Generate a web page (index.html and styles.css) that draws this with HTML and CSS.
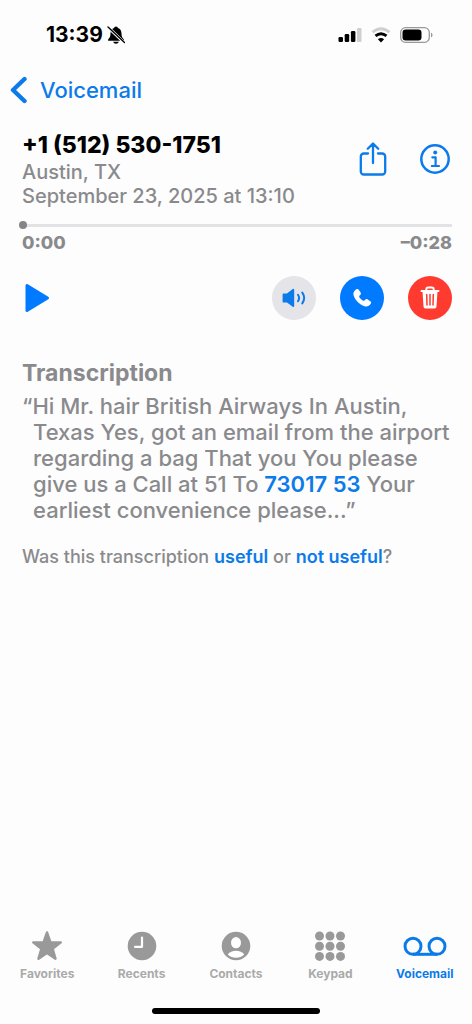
FILE: index.html
```html
<!DOCTYPE html>
<html lang="en">
<head>
<meta charset="utf-8">
<meta name="viewport" content="width=device-width, initial-scale=1">
<title>Voicemail</title>
<link rel="stylesheet" href="styles.css">
</head>
<body>
<div class="screen">
  <header class="status">
    <div class="status-left">
      <span class="clock">13:39</span>
      <svg class="bell" width="18" height="20" viewBox="0 0 18 20" aria-label="Silent">
        <path d="M9 1.500c-1.200 0-1.800.8-1.900 1.500C4.600 3.800 3.500 6 3.500 8.500c0 3.500-1.200 4.500-2.200 5.700-.6.800-.3 1.600.7 1.600h14c1 0 1.300-.8.7-1.600-1-1.200-2.200-2.200-2.200-5.700 0-2.500-1.100-4.700-3.600-5.500C10.800 2.300 10.200 1.500 9 1.500zM6.200 16.800h5.600c-.3 1.300-1.400 2-2.800 2s-2.500-.7-2.800-2z"/>
        <path d="M1 2.200 17 17.500" stroke="#fff" stroke-width="3"/>
        <path d="M1 2 17.500 17.500" stroke="#000" stroke-width="1.400" stroke-linecap="round"/>
      </svg>
    </div>
    <div class="status-right">
      <svg width="24" height="16" viewBox="0 0 24 16" aria-label="Signal">
        <rect x="0.500" y="10" width="4.500" height="5" rx="1.300"/>
        <rect x="6.700" y="7" width="4.500" height="8" rx="1.300"/>
        <rect x="12.900" y="4" width="4.500" height="11" rx="1.300"/>
        <rect x="19" y="1" width="4.500" height="14" rx="1.300" fill="#cfcfcf"/>
      </svg>
      <svg width="20" height="16" viewBox="0 0 20 16" fill="none" aria-label="Wi-Fi">
        <path d="M1.500 5.200Q10-1.800 18.500 5.200" stroke="#cfcfcf" stroke-width="2.800"/>
        <path d="M4.500 8.900Q10 4.500 15.500 8.900" stroke="#000" stroke-width="2.900"/>
        <path d="M10 15.500 6.900 12.200Q10 9.700 13.100 12.200Z" fill="#000"/>
      </svg>
      <svg width="33" height="16" viewBox="0 0 33 16" aria-label="Battery">
        <rect x="0.700" y="0.700" width="28.600" height="14.600" rx="4.800" fill="none" stroke="#999" stroke-width="1.300"/>
        <rect x="2.500" y="2.500" width="19" height="11" rx="3.200"/>
        <path d="M31 5.700c2 .7 2 3.900 0 4.600z" fill="#999"/>
      </svg>
    </div>
  </header>

  <nav class="topbar">
    <a class="back" href="#voicemail">
      <svg width="18" height="28" viewBox="0 0 18 28" fill="none"><path d="M14.500 3 3 14l11.500 11" stroke="currentColor" stroke-width="4.400" stroke-linecap="round" stroke-linejoin="round"/></svg>
      <span>Voicemail</span>
    </a>
  </nav>

  <main class="content">
    <section class="caller">
      <div class="caller-text">
        <h1 class="number">+1 (512) 530-1751</h1>
        <p class="meta">Austin, TX</p>
        <p class="meta">September 23, 2025 at 13:10</p>
      </div>
      <div class="caller-actions">
        <button class="icon-button" type="button" aria-label="Share">
          <svg width="28" height="34" viewBox="0 0 28 34" fill="none" stroke="currentColor" stroke-width="2.300" stroke-linecap="round" stroke-linejoin="round"><path d="M9 11.500H4.800A3 3 0 0 0 1.800 14.500V29.500A3 3 0 0 0 4.800 32.500H23.200A3 3 0 0 0 26.200 29.500V14.500A3 3 0 0 0 23.200 11.500H19M14 21V1.800M8.800 6.800 14 1.500 19.200 6.800"/></svg>
        </button>
        <button class="icon-button" type="button" aria-label="Details">
          <svg width="30" height="30" viewBox="0 0 30 30" fill="none" stroke="currentColor"><circle cx="15" cy="15" r="13.700" stroke-width="2.500"/><circle cx="15.200" cy="8.600" r="2" fill="currentColor" stroke="none"/><path d="M12.300 13.300H15.600V21.800M11.800 22H19" stroke-width="2.200" stroke-linecap="round" stroke-linejoin="round"/></svg>
        </button>
      </div>
    </section>

    <section class="player">
      <input class="scrubber" type="range" min="0" max="28" value="0" aria-label="Playback position">
      <div class="times"><span>0:00</span><span>–0:28</span></div>
    </section>

    <section class="controls">
      <button class="play" type="button" aria-label="Play">
        <svg width="26" height="30" viewBox="0 0 26 30"><path d="M3 2.500v25L23.500 15z" fill="currentColor" stroke="currentColor" stroke-width="3" stroke-linejoin="round"/></svg>
      </button>
      <div class="rounds">
        <button class="round speaker" type="button" aria-label="Speaker">
          <svg width="24" height="20" viewBox="0 0 24 20" fill="none" stroke="currentColor" stroke-width="2" stroke-linecap="round"><path d="M1.500 6.300H5.500L11.300 1.800V18L5.500 13.700H1.500z" fill="currentColor" stroke-width="1.800" stroke-linejoin="round"/><path d="M16 6.800Q18.200 10 16 13.200M20.300 4.600Q24 10 20.300 15.400"/></svg>
        </button>
        <button class="round call" type="button" aria-label="Call">
          <svg width="20" height="20" viewBox="0 0 20 20"><path d="M4.300 1.300C5.200.6 6.200.8 6.800 1.700L8.600 4.400C9.200 5.300 9 6.100 8.200 6.900L7.400 7.700C7 8.100 7 8.500 7.300 9 8.300 10.600 9.500 11.800 11.100 12.700 11.600 13 12 12.900 12.400 12.500L13.200 11.700C14 10.900 14.800 10.800 15.700 11.400L18.300 13.200C19.200 13.800 19.400 14.800 18.700 15.700 17.200 17.800 15.100 19.200 12.500 18.200 7.300 16.300 3.300 12.200 1.600 7.400.8 5 2.200 2.900 4.300 1.300Z" fill="currentColor"/></svg>
        </button>
        <button class="round delete" type="button" aria-label="Delete">
          <svg width="20" height="24" viewBox="0 0 20 24" fill="none"><path d="M1.500 5H18.500M6.300 5V3.300A1.800 1.800 0 0 1 8.100 1.500H11.900A1.800 1.800 0 0 1 13.700 3.300V5" stroke="currentColor" stroke-width="1.900" stroke-linecap="round"/><path d="M2.500 5H17.500L16.500 20.500A2 2 0 0 1 14.500 22.500H5.500A2 2 0 0 1 3.500 20.500Z" fill="currentColor"/><path d="M6.700 8.500 7 19M10 8.500V19M13.300 8.500 13 19" stroke="#ff3b30" stroke-width="1.500" stroke-linecap="round"/></svg>
        </button>
      </div>
    </section>

    <section class="transcription">
      <h2 class="heading">Transcription</h2>
      <p class="quote">“Hi Mr. hair British Airways In Austin,<br>Texas Yes, got an email from the airport<br>regarding a bag That you You please<br>give us a Call at 51 To <a href="tel:7301753">73017 53</a> Your<br>earliest convenience please...”</p>
      <p class="feedback">Was this transcription <a href="#useful">useful</a> or <a href="#not-useful">not useful</a>?</p>
    </section>
  </main>

  <nav class="tabs">
    <a class="tab" href="#favorites">
      <svg width="32" height="32" viewBox="0 0 32 32"><path d="M16 2.500 19.400 12.100 29.800 12.400 21.600 18.700 24.500 28.700 16 22.900 7.500 28.700 10.400 18.700 2.200 12.400 12.600 12.100Z" fill="currentColor" stroke="currentColor" stroke-width="2.400" stroke-linejoin="round"/></svg>
      <span>Favorites</span>
    </a>
    <a class="tab" href="#recents">
      <svg width="32" height="32" viewBox="0 0 32 32"><circle cx="16" cy="16" r="14.300" fill="currentColor"/><path d="M16 7.500V16.800H9" fill="none" stroke="#fff" stroke-width="2.200" stroke-linecap="round" stroke-linejoin="round"/></svg>
      <span>Recents</span>
    </a>
    <a class="tab" href="#contacts">
      <svg width="32" height="32" viewBox="0 0 32 32"><circle cx="16" cy="16" r="14.300" fill="currentColor"/><ellipse cx="16" cy="12.700" rx="5" ry="5.600" fill="#fff"/><path d="M7.800 24.500C9.500 21.800 12.500 20.700 16 20.700S22.500 21.800 24.200 24.500A12 12 0 0 1 7.800 24.500Z" fill="#fff"/></svg>
      <span>Contacts</span>
    </a>
    <a class="tab" href="#keypad">
      <svg width="32" height="32" viewBox="0 0 32 32" fill="currentColor"><circle cx="5.500" cy="6" r="4.500"/><circle cx="16" cy="6" r="4.500"/><circle cx="26.500" cy="6" r="4.500"/><circle cx="5.500" cy="16.200" r="4.500"/><circle cx="16" cy="16.200" r="4.500"/><circle cx="26.500" cy="16.200" r="4.500"/><circle cx="5.500" cy="26.400" r="4.500"/><circle cx="16" cy="26.400" r="4.500"/><circle cx="26.500" cy="26.400" r="4.500"/></svg>
      <span>Keypad</span>
    </a>
    <a class="tab active" href="#voicemail" aria-current="page">
      <svg width="44" height="32" viewBox="0 0 44 32" fill="none" stroke="currentColor" stroke-width="3"><circle cx="10" cy="16.300" r="8"/><circle cx="34" cy="16.300" r="8"/><path d="M10 24.300H34"/></svg>
      <span>Voicemail</span>
    </a>
  </nav>
  <div class="home"></div>
</div>
</body>
</html>
```
FILE: styles.css
```css
* { box-sizing: border-box; }

body {
  margin: 0;
  background: #fdfdfd;
  color: #000;
  font-family: Inter, "Liberation Sans", sans-serif;
}

h1, h2, p { margin: 0; }

a { color: #0b7bea; text-decoration: none; }

svg { display: block; flex: none; }

button {
  border: 0;
  padding: 0;
  background: none;
  color: #0b7bea;
  cursor: pointer;
}

.screen {
  display: flex;
  flex-direction: column;
  min-height: 100vh;
}

.status {
  display: flex;
  justify-content: space-between;
  align-items: center;
  height: 70px;
  padding: 0 39px 0 46px;
}

.status-left { display: flex; align-items: center; gap: 4px; }

.clock { font-size: 21px; font-weight: 700; line-height: 24px; }

.status-right { display: flex; align-items: center; gap: 9px; }

.topbar { padding: 4px 10px; }

.back {
  display: inline-flex;
  align-items: center;
  gap: 12px;
  font-size: 22px;
  font-weight: 500;
  line-height: 32px;
}

.content { flex: 1; padding: 20px 20px 0 22px; }

.caller { display: flex; justify-content: space-between; }

.number { padding-bottom: 2px; font-size: 23px; font-weight: 800; line-height: 26px; }

.meta { color: #8a8a8d; font-size: 20px; font-weight: 500; line-height: 24px; }

.caller-actions {
  display: flex;
  align-items: center;
  gap: 33px;
  height: 54px;
  padding-right: 2px;
}

.player { padding-top: 13px; }

.scrubber {
  appearance: none;
  display: block;
  width: calc(100% + 3px);
  height: 8px;
  margin: 0 0 0 -3px;
  background: linear-gradient(#e3e3e5, #e3e3e5) right / calc(100% - 4px) 3px no-repeat;
}

.scrubber::-webkit-slider-thumb {
  appearance: none;
  width: 8px;
  height: 8px;
  border-radius: 50%;
  background: #858587;
}

.times {
  display: flex;
  justify-content: space-between;
  padding-top: 3px;
  color: #8a8a8d;
  font-size: 18px;
  font-weight: 800;
  line-height: 22px;
}

.controls {
  display: flex;
  justify-content: space-between;
  align-items: center;
  padding-top: 22px;
}

.play { padding-left: 2px; color: #007aff; }

.rounds { display: flex; gap: 24px; }

.round {
  display: grid;
  place-items: center;
  width: 44px;
  height: 44px;
  border-radius: 50%;
  color: #fff;
}

.speaker { background: #e4e4e9; color: #0b7bea; }
.call { background: #007aff; }
.delete { background: #ff3b30; }

.transcription { padding-top: 39px; color: #8a8a8d; }

.heading { font-size: 23px; font-weight: 700; line-height: 28px; }

.quote {
  padding: 6px 0 0 11px;
  font-size: 22px;
  font-weight: 500;
  line-height: 26px;
  text-indent: -11px;
  white-space: nowrap;
}

.quote a { font-weight: 600; }

.feedback {
  padding-top: 22px;
  font-size: 18px;
  font-weight: 500;
  line-height: 24px;
}

.feedback a { font-weight: 600; }

.tabs {
  display: grid;
  grid-template-columns: repeat(5, 1fr);
}

.tab {
  display: flex;
  flex-direction: column;
  align-items: center;
  gap: 4px;
  color: #999;
  font-size: 12px;
  font-weight: 700;
  line-height: 16px;
}

.tab span { color: #aaa; }

.active, .active span { color: #0b7bea; }

.home {
  width: 168px;
  height: 6px;
  margin: 26px auto 10px;
  border-radius: 3px;
  background: #000;
}
```
